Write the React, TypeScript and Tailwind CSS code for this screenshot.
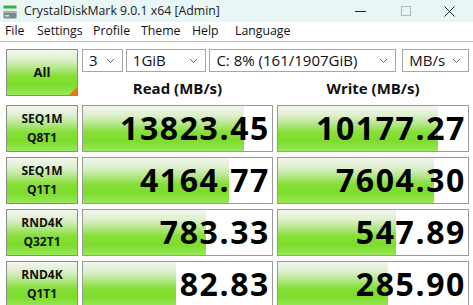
import React from 'react'

const GREEN =
  'bg-[linear-gradient(to_bottom,#f2f6ee_0%,#dff0d0_20%,#b4e78a_40%,#86df38_58%,#7ddc2c_78%,#9ae85a_100%)]'

interface Row {
  top: string
  bottom: string
  read: string
  readPct: number
  write: string
  writePct: number
}

const rows: Row[] = [
  { top: 'SEQ1M', bottom: 'Q8T1', read: '13823.45', readPct: 85, write: '10177.27', writePct: 84 },
  { top: 'SEQ1M', bottom: 'Q1T1', read: '4164.77', readPct: 77, write: '7604.30', writePct: 82 },
  { top: 'RND4K', bottom: 'Q32T1', read: '783.33', readPct: 65, write: '547.89', writePct: 62 },
  { top: 'RND4K', bottom: 'Q1T1', read: '82.83', readPct: 49, write: '285.90', writePct: 58 },
]

const menu: [string, string][] = [
  ['File', 'w-[32px]'],
  ['Settings', 'w-[56px]'],
  ['Profile', 'w-[48px]'],
  ['Theme', 'w-[51px]'],
  ['Help', 'w-[43px]'],
  ['Language', 'w-auto'],
]

function AppIcon() {
  return (
    <svg width="14" height="14" viewBox="0 0 14 14">
      <rect x="0.5" y="0.5" width="13" height="3" fill="#35b53a" />
      <rect x="0.5" y="6" width="13" height="7.5" rx="1" fill="#7d8a8a" />
      <rect x="0.5" y="6" width="13" height="2" fill="#a9b3b3" />
      <rect x="2" y="10" width="4" height="1.5" fill="#dfe5e5" />
    </svg>
  )
}

function Chevron() {
  return (
    <svg width="9" height="6" viewBox="0 0 9 6" className="shrink-0">
      <path d="M1 1 L4.5 4.5 L8 1" fill="none" stroke="#666" strokeWidth="1" />
    </svg>
  )
}

function Select({ value, className }: { value: string; className: string }) {
  return (
    <div
      className={`flex h-[23px] items-center justify-between border border-[#a6a6a6] bg-white pl-[6px] pr-[7px] text-[15px] leading-none text-[#111] ${className}`}
    >
      <span>{value}</span>
      <Chevron />
    </div>
  )
}

function Result({ value, pct }: { value: string; pct: number }) {
  return (
    <div className="relative h-[47px] border border-[#9a9a9a] bg-white">
      <div className={`absolute inset-y-0 left-0 ${GREEN}`} style={{ width: `${pct}%` }} />
      <div className="relative flex h-full items-center justify-end pr-[2px] text-[32px] font-bold leading-none tracking-[1.6px] text-black">
        {value}
      </div>
    </div>
  )
}

export default function App() {
  return (
    <div
      className="h-[305px] w-[473px] overflow-hidden bg-white text-[#111]"
      style={{ fontFamily: '"Open Sans", "Noto Sans", sans-serif' }}
    >
      {/* Title bar */}
      <div className="flex h-[22px] items-center bg-[#e8f6f6]">
        <div className="ml-[3px] mt-[1px]">
          <AppIcon />
        </div>
        <span className="ml-[7px] text-[12.3px] text-[#1b1b1b]">CrystalDiskMark 9.0.1 x64 [Admin]</span>
        <div className="ml-auto flex h-full items-center">
          <div className="flex w-[45px] justify-center">
            <div className="h-px w-[11px] bg-[#222]" />
          </div>
          <div className="flex w-[45px] justify-center">
            <div className="h-[10px] w-[10px] border border-[#b5b5b5]" />
          </div>
          <div className="flex w-[45px] justify-center pr-[2px]">
            <svg width="11" height="11" viewBox="0 0 11 11">
              <path d="M0.5 0.5 L10.5 10.5 M10.5 0.5 L0.5 10.5" stroke="#222" strokeWidth="1" />
            </svg>
          </div>
        </div>
      </div>

      {/* Menu */}
      <div className="flex h-[20px] items-center border-b border-[#bdbdbd] pl-[5px] text-[12.3px] text-[#111]">
        {menu.map(([label, w]) => (
          <span key={label} className={w}>
            {label}
          </span>
        ))}
      </div>

      {/* Body */}
      <div className="grid grid-cols-[72px_191px_192px] gap-x-[4px] pl-[6px] pt-[7px]">
        <div className={`relative h-[47px] border border-[#8c8c8c] ${GREEN} flex items-center justify-center`}>
          <span className="text-[13px] font-bold text-[#111]">All</span>
          <div className="absolute bottom-0 right-0 h-0 w-0 border-b-[8px] border-l-[8px] border-b-[#e8741c] border-l-transparent" />
        </div>
        <div className="col-span-2 flex flex-col">
          <div className="flex gap-[3px]">
            <Select value="3" className="w-[41px]" />
            <Select value="1GiB" className="w-[81px]" />
            <Select value="C: 8% (161/1907GiB)" className="w-[188px]" />
            <Select value="MB/s" className="ml-[3px] w-[67px]" />
          </div>
          <div className="grid flex-1 grid-cols-[191px_192px] gap-x-[4px]">
            <div className="flex items-center justify-center pt-[5px] text-[15px] font-bold">Read (MB/s)</div>
            <div className="flex items-center justify-center pt-[5px] text-[15px] font-bold">Write (MB/s)</div>
          </div>
        </div>

        {rows.map((r, i) => (
          <React.Fragment key={i}>
            <div
              className={`mt-[5px] flex h-[47px] flex-col items-center justify-center border border-[#8c8c8c] ${GREEN} text-[12px] font-bold leading-[19px] text-[#111]`}
            >
              <span>{r.top}</span>
              <span>{r.bottom}</span>
            </div>
            <div className="mt-[5px]">
              <Result value={r.read} pct={r.readPct} />
            </div>
            <div className="mt-[5px]">
              <Result value={r.write} pct={r.writePct} />
            </div>
          </React.Fragment>
        ))}
      </div>
    </div>
  )
}
